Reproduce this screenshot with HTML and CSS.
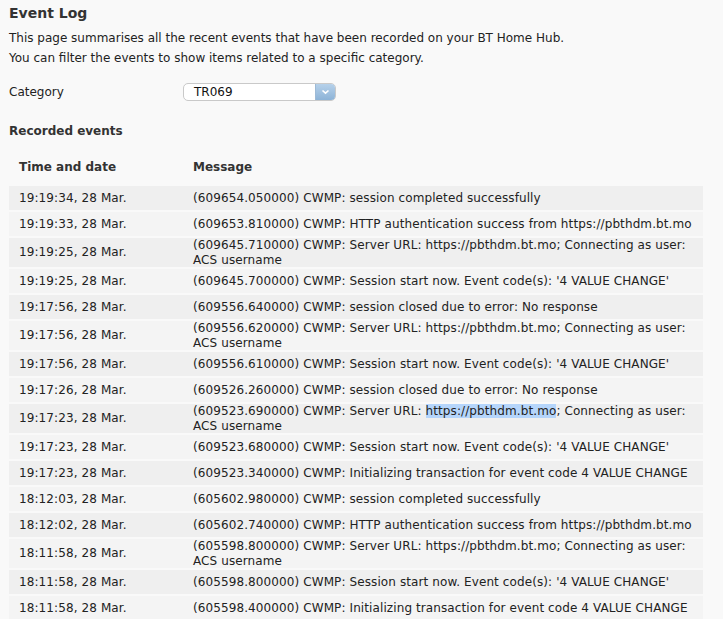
FILE: index.html
```html
<!DOCTYPE html>
<html lang="en">
<head>
    <meta charset="UTF-8">
    <title>Event Log</title>
    <link rel="stylesheet" href="styles.css">
</head>
<body>
    <div class="page">
        <h1>Event Log</h1>
        <p class="intro">This page summarises all the recent events that have been recorded on your BT Home Hub.<br>
        You can filter the events to show items related to a specific category.</p>

        <div class="filter">
            <label for="category">Category</label>
            <div class="select">
                <span class="select-value">TR069</span>
                <span class="select-arrow">
                    <svg width="9" height="6" viewBox="0 0 9 6"><path d="M1.5 1.5 L4.5 4.2 L7.5 1.5" fill="none" stroke="#fff" stroke-width="1.6"/></svg>
                </span>
            </div>
        </div>

        <h2>Recorded events</h2>

        <table class="events">
            <thead>
                <tr><th class="col-time">Time and date</th><th>Message</th></tr>
            </thead>
            <tbody>
                <tr><td>19:19:34, 28 Mar.</td><td>(609654.050000) CWMP: session completed successfully</td></tr>
                <tr><td>19:19:33, 28 Mar.</td><td>(609653.810000) CWMP: HTTP authentication success from https://pbthdm.bt.mo</td></tr>
                <tr><td>19:19:25, 28 Mar.</td><td>(609645.710000) CWMP: Server URL: https://pbthdm.bt.mo; Connecting as user: ACS username</td></tr>
                <tr><td>19:19:25, 28 Mar.</td><td>(609645.700000) CWMP: Session start now. Event code(s): '4 VALUE CHANGE'</td></tr>
                <tr><td>19:17:56, 28 Mar.</td><td>(609556.640000) CWMP: session closed due to error: No response</td></tr>
                <tr><td>19:17:56, 28 Mar.</td><td>(609556.620000) CWMP: Server URL: https://pbthdm.bt.mo; Connecting as user: ACS username</td></tr>
                <tr><td>19:17:56, 28 Mar.</td><td>(609556.610000) CWMP: Session start now. Event code(s): '4 VALUE CHANGE'</td></tr>
                <tr><td>19:17:26, 28 Mar.</td><td>(609526.260000) CWMP: session closed due to error: No response</td></tr>
                <tr><td>19:17:23, 28 Mar.</td><td>(609523.690000) CWMP: Server URL: <span class="hl">https://pbthdm.bt.mo</span>; Connecting as user: ACS username</td></tr>
                <tr><td>19:17:23, 28 Mar.</td><td>(609523.680000) CWMP: Session start now. Event code(s): '4 VALUE CHANGE'</td></tr>
                <tr><td>19:17:23, 28 Mar.</td><td>(609523.340000) CWMP: Initializing transaction for event code 4 VALUE CHANGE</td></tr>
                <tr><td>18:12:03, 28 Mar.</td><td>(605602.980000) CWMP: session completed successfully</td></tr>
                <tr><td>18:12:02, 28 Mar.</td><td>(605602.740000) CWMP: HTTP authentication success from https://pbthdm.bt.mo</td></tr>
                <tr><td>18:11:58, 28 Mar.</td><td>(605598.800000) CWMP: Server URL: https://pbthdm.bt.mo; Connecting as user: ACS username</td></tr>
                <tr><td>18:11:58, 28 Mar.</td><td>(605598.800000) CWMP: Session start now. Event code(s): '4 VALUE CHANGE'</td></tr>
                <tr><td>18:11:58, 28 Mar.</td><td>(605598.400000) CWMP: Initializing transaction for event code 4 VALUE CHANGE</td></tr>
            </tbody>
        </table>
    </div>
</body>
</html>
```

FILE: styles.css
```css
* {
    margin: 0;
    padding: 0;
    box-sizing: border-box;
}

body {
    font-family: 'DejaVu Sans', Verdana, sans-serif;
    font-size: 12px;
    color: #222;
    background: #f9f9f9;
}

.page {
    padding: 4px 9px 0 9px;
}

h1 {
    font-size: 14px;
    font-weight: bold;
    color: #333;
    line-height: 18px;
    margin-bottom: 6px;
}

.intro {
    line-height: 20px;
    margin-bottom: 15px;
}

.filter {
    display: flex;
    align-items: center;
    height: 18px;
    margin-bottom: 22px;
}

.filter label {
    width: 174px;
}

.select {
    display: flex;
    width: 153px;
    height: 18px;
    border: 1px solid #c9c9c9;
    border-radius: 5px;
    background: #fff;
    overflow: hidden;
}

.select-value {
    flex: 1;
    padding-left: 10px;
    line-height: 16px;
    color: #111;
}

.select-arrow {
    width: 20px;
    display: flex;
    align-items: center;
    justify-content: center;
    background: linear-gradient(#b6d1ea, #8db3d7);
    border-left: 1px solid #9dbad6;
}

h2 {
    font-size: 12px;
    font-weight: bold;
    color: #333;
    line-height: 16px;
    margin-bottom: 9px;
}

.events {
    width: 694px;
    border-collapse: separate;
    border-spacing: 0 2px;
}

.events th {
    text-align: left;
    font-weight: bold;
    color: #333;
    height: 34px;
    padding: 0 10px;
}

.events .col-time {
    width: 174px;
}

.events td {
    height: 24px;
    padding: 0 10px;
    line-height: 14.5px;
    vertical-align: middle;
    letter-spacing: 0.1px;
}

.events tbody tr:nth-child(odd) {
    background: #efefef;
}

.events tbody tr:nth-child(even) {
    background: #f4f4f4;
}

.hl {
    background: #b5d5fb;
}
```
